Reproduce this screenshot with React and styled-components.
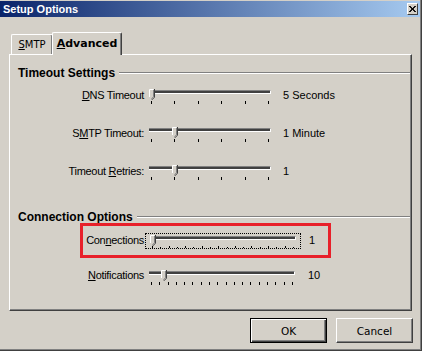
import styled, { createGlobalStyle } from "styled-components";

const GlobalStyle = createGlobalStyle`
  html, body {
    margin: 0;
    padding: 0;
    background: #d4d0c8;
  }
  body {
    font-family: "Liberation Sans", Arial, sans-serif;
    font-size: 11px;
    color: #000;
  }
`;

const Window = styled.div`
  width: 422px;
  height: 351px;
  box-sizing: border-box;
  padding-top: 1px;
  background: #d4d0c8;
  box-shadow: inset -1px -1px #404040, inset -2px -2px #808080;
  display: flex;
  flex-direction: column;
`;

const TitleBar = styled.div`
  height: 16px;
  margin-right: 2px;
  display: flex;
  align-items: center;
  justify-content: space-between;
  padding: 0 2px 0 3px;
  background: linear-gradient(to right, #0a246a, #a6caf0);
  color: #fff;
  font-weight: bold;
  font-size: 11px;
`;

const CloseButton = styled.div`
  width: 11px;
  height: 12px;
  box-sizing: border-box;
  background: #d4d0c8;
  border-top: 1px solid #fff;
  border-left: 1px solid #fff;
  border-right: 1px solid #404040;
  border-bottom: 1px solid #404040;
  display: flex;
  align-items: center;
  justify-content: center;
`;

const Body = styled.div`
  display: flex;
  flex-direction: column;
  padding: 15px 0 0 9px;
`;

const TabStrip = styled.div`
  display: flex;
  align-items: flex-end;
  height: 22px;
  padding-left: 2px;
`;

const Tab = styled.div`
  position: relative;
  box-sizing: border-box;
  width: ${(p) => p.$w}px;
  height: ${(p) => (p.$active ? 23 : 20)}px;
  margin-left: ${(p) => (p.$active ? -1 : 0)}px;
  margin-bottom: ${(p) => (p.$active ? -1 : 0)}px;
  z-index: ${(p) => (p.$active ? 2 : 1)};
  background: #d4d0c8;
  border-top: 1px solid #fff;
  border-left: 1px solid #fff;
  border-right: 1px solid #404040;
  border-radius: 2px 2px 0 0;
  box-shadow: inset -1px 0 #808080;
  display: flex;
  align-items: center;
  justify-content: center;
  padding-bottom: ${(p) => (p.$active ? 1 : 0)}px;
  font-family: "DejaVu Sans", Tahoma, sans-serif;
  font-size: ${(p) => (p.$active ? 11 : 10)}px;
  font-weight: ${(p) => (p.$active ? "bold" : "normal")};
`;

const Panel = styled.div`
  width: 403px;
  height: 257px;
  box-sizing: border-box;
  border-top: 1px solid #fff;
  border-left: 1px solid #fff;
  border-right: 1px solid #404040;
  border-bottom: 1px solid #404040;
  box-shadow: inset -1px -1px #808080;
  padding: 11px 1px 0 0;
  display: flex;
  flex-direction: column;
`;

const GroupHeader = styled.div`
  display: flex;
  align-items: center;
  height: 14px;
  padding-left: 8px;
  margin-top: ${(p) => p.$top || 0}px;
  font-weight: bold;
  font-size: 12px;
`;

const HeaderLine = styled.div`
  flex: 1;
  margin-left: 4px;
  border-top: 1px solid #808080;
  border-bottom: 1px solid #fff;
`;

const Rows = styled.div`
  display: flex;
  flex-direction: column;
  gap: ${(p) => p.$gap}px;
  margin-top: ${(p) => p.$top || 0}px;
`;

const Row = styled.div`
  position: relative;
  display: grid;
  grid-template-columns: 134px auto 1fr;
  height: 30px;
`;

const Label = styled.div`
  align-self: center;
  text-align: right;
  white-space: nowrap;
  letter-spacing: -0.3px;
  line-height: 13px;
`;

const Value = styled.div`
  align-self: center;
  margin-left: ${(p) => p.$gap}px;
  line-height: 13px;
  white-space: nowrap;
`;

const Key = styled.span`
  text-decoration: underline;
  text-underline-offset: 1px;
`;

const Frame = styled.div`
  align-self: start;
  margin: ${(p) => p.$top}px 0 0 1px;
  border: 1px dotted ${(p) => (p.$focus ? "#000" : "transparent")};
  padding: 1px 4px ${(p) => (p.$focus ? 0 : 1)}px ${(p) => p.$padL}px;
  display: flex;
  flex-direction: column;
`;

const TrackArea = styled.div`
  position: relative;
  width: ${(p) => p.$w}px;
  height: 11px;
`;

const Groove = styled.div`
  margin-top: 1px;
  height: 2px;
  border-top: 1px solid #808080;
  border-bottom: 1px solid #fff;
  border-right: 1px solid #fff;
  background: #404040;
`;

const ThumbBox = styled.div`
  position: absolute;
  top: 0;
  width: 6px;
  height: 11px;
  line-height: 0;
`;

const Ticks = styled.div`
  display: flex;
  justify-content: space-between;
  padding: 0 2px;
  margin-top: ${(p) => (p.$small ? 0 : 1)}px;
  height: ${(p) => (p.$small ? 2 : 3)}px;
`;

const Tick = styled.div`
  width: 1px;
  height: ${(p) => p.$h}px;
  background: #000;
  align-self: flex-end;
`;

const Highlight = styled.div`
  position: absolute;
  left: 70px;
  top: -2px;
  width: 251px;
  height: 35px;
  box-sizing: border-box;
  border: 3px solid #e8202a;
  pointer-events: none;
`;

const ButtonRow = styled.div`
  display: flex;
  justify-content: flex-end;
  gap: 9px;
  margin-top: 7px;
  padding-right: 9px;
`;

const Button = styled.div`
  width: 77px;
  height: 25px;
  box-sizing: border-box;
  background: #d4d0c8;
  border: 1px solid;
  border-color: ${(p) => (p.$default ? "#000" : "#fff #404040 #404040 #fff")};
  box-shadow: ${(p) =>
    p.$default
      ? "inset 1px 1px #fff, inset -1px -1px #404040, inset -2px -2px #808080"
      : "inset -1px -1px #808080"};
  display: flex;
  align-items: center;
  justify-content: center;
  font-family: "DejaVu Sans", Tahoma, sans-serif;
  font-size: 10.5px;
`;

function ThumbIcon() {
  return (
    <svg width="6" height="11" viewBox="0 0 6 11">
      <path d="M0 0H5V8L2.5 10.5L0 8Z" fill="#d4d0c8" />
      <path d="M0.5 8V0.5H4.5" stroke="#fff" fill="none" />
      <path d="M5.5 0V8.2L2.8 10.9" stroke="#404040" fill="none" />
      <path d="M4.5 1V7.8L2.5 9.8" stroke="#808080" fill="none" />
    </svg>
  );
}

function Slider({ width, ticks, frac, focus, small, padL, top }) {
  const left = Math.round(frac * (width - 5));
  return (
    <Frame $focus={focus} $padL={padL} $top={top}>
      <TrackArea $w={width}>
        <Groove />
        <ThumbBox style={{ left }}>
          <ThumbIcon />
        </ThumbBox>
      </TrackArea>
      <Ticks $small={small}>
        {Array.from({ length: ticks }).map((_, i) => (
          <Tick key={i} $h={small ? (i % 2 === 0 ? 2 : 1) : 3} />
        ))}
      </Ticks>
    </Frame>
  );
}

export default function App() {
  return (
    <>
      <GlobalStyle />
      <Window>
        <TitleBar>
          <span>Setup Options</span>
          <CloseButton>
            <svg width="7" height="6" viewBox="0 0 7 6">
              <path d="M0 0L6 6M1 0L7 6M6 0L0 6M7 0L1 6" stroke="#000" strokeWidth="0.9" />
            </svg>
          </CloseButton>
        </TitleBar>
        <Body>
          <TabStrip>
            <Tab $w={42}>
              <span>
                <Key>S</Key>MTP
              </span>
            </Tab>
            <Tab $w={70} $active>
              <span>
                <Key>A</Key>dvanced
              </span>
            </Tab>
          </TabStrip>
          <Panel>
            <GroupHeader>
              Timeout Settings
              <HeaderLine />
            </GroupHeader>
            <Rows $gap={8}>
              <Row>
                <Label>
                  <Key>D</Key>NS Timeout
                </Label>
                <Slider width={122} ticks={6} frac={0} padL={3} top={7} />
                <Value $gap={7}>5 Seconds</Value>
              </Row>
              <Row>
                <Label>
                  S<Key>M</Key>TP Timeout:
                </Label>
                <Slider width={122} ticks={6} frac={0.2} padL={3} top={7} />
                <Value $gap={7}>1 Minute</Value>
              </Row>
              <Row>
                <Label>
                  Timeout <Key>R</Key>etries:
                </Label>
                <Slider width={122} ticks={6} frac={0.2} padL={3} top={7} />
                <Value $gap={7}>1</Value>
              </Row>
            </Rows>
            <GroupHeader $top={24}>
              Connection Options
              <HeaderLine />
            </GroupHeader>
            <Rows $gap={5} $top={1}>
              <Row>
                <Label>
                  Con<Key>n</Key>ections
                </Label>
                <Slider width={146} ticks={18} frac={0} focus small padL={4} top={8} />
                <Value $gap={8}>1</Value>
                <Highlight />
              </Row>
              <Row>
                <Label>
                  <Key>N</Key>otifications
                </Label>
                <Slider width={146} ticks={18} frac={0.085} padL={3} top={8} />
                <Value $gap={8}>10</Value>
              </Row>
            </Rows>
          </Panel>
          <ButtonRow>
            <Button $default>OK</Button>
            <Button>Cancel</Button>
          </ButtonRow>
        </Body>
      </Window>
    </>
  );
}
